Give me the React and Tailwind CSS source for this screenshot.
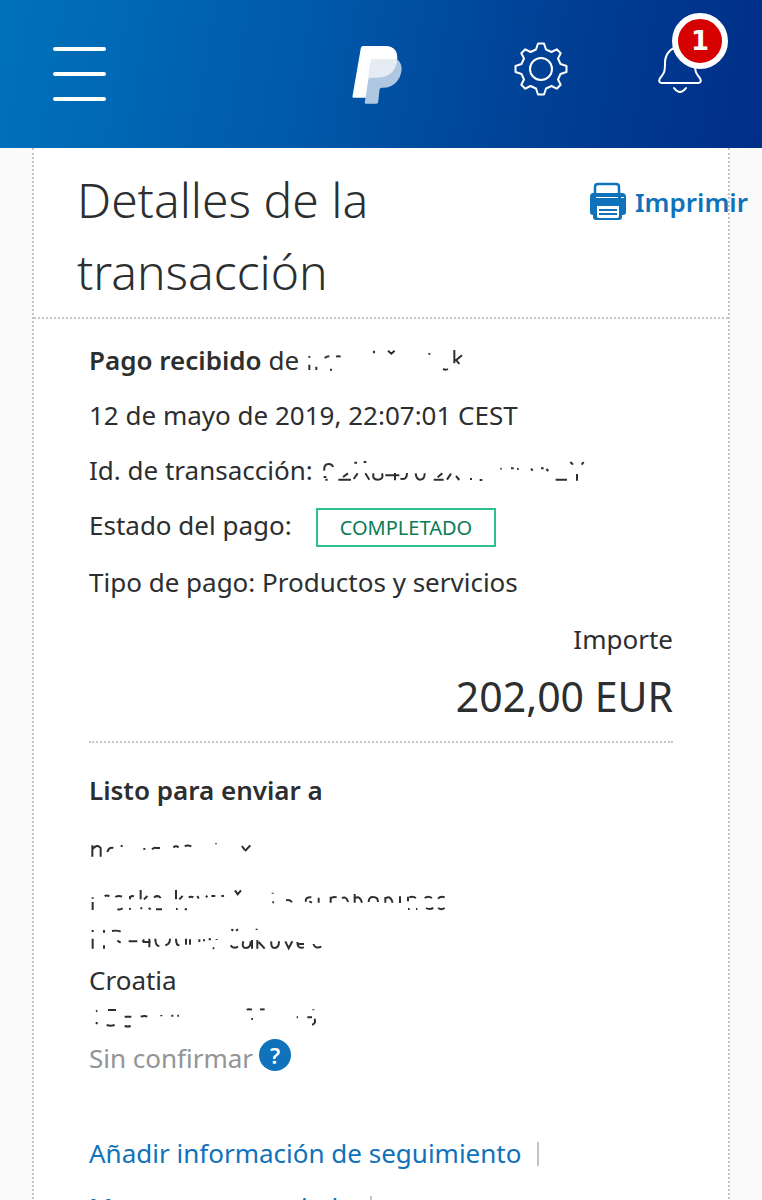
import React from "react";

const HIDDEN = {
  sender: {
    viewBox: "655 33 480 117",
    className: "w-[160px] h-[39px]",
    d: "M662 78v5M662 104v16M683 110v10M708 84q6 -5 14 -5M742 80q8 -3 14 0M724 119h6M856 62v8M898 62l10 9l10 -9M1022 69v5M1063 117q8 4 15 0M1097 60v40M1100 92l20 -16M1104 92l8 10",
  },
  transactionId: {
    viewBox: "700 363 801 117",
    className: "w-[267px] h-[39px]",
    d: "M710 422q-2 -20 13 -20q11 0 13 9M708 441h8M713 449h7M752 449h38M766 441l15 -11M798 447l12 -17M833 430l12 19M858 430q-6 19 13 19q18 0 12 -19M893 436h42M922 429v22M938 446q20 6 20 -17M984 430q2 19 14 19q13 0 13 -19M1038 449h30M1050 442l14 -12M1078 449l12 -18M1105 438l10 12M1150 444v6M1176 450h8M800 398h8M828 396h8M1238 416h4M1270 415h8M1288 417h5M1330 416l5 6M1360 415h8M1376 417l6 6M1404 449h34M1448 396l8 8M1488 396l-6 8M1468 432v20",
  },
  name: {
    viewBox: "27 216 501 117",
    className: "w-[167px] h-[39px]",
    d: "M37 256v34M37 268q14 -18 25 -4v26M82 276q4 -16 18 -12M122 257l6 2M190 268l6 -2M216 268q6 -6 14 -4h10M280 262q8 -6 16 0M314 258q10 -3 20 1M408 250v3M486 258l8 12M511 256l-16 17",
  },
  street: {
    viewBox: "27 375 1080 117",
    className: "w-[360px] h-[39px]",
    d: "M38 418v4M38 432v24M74 415q6 -5 14 0M106 417q10 -6 20 -1M150 424v-10M150 417q6 -4 12 -2M182 396v28M192 424l10 -10M222 418q12 -8 20 2M288 396v28M298 424l10 -10M326 418q8 -4 14 0M352 414l4 8M378 418l4 -5M394 414h12M424 415l8 -2M465 397l8 12l10 -12M112 454q10 2 16 -3M150 450v5M184 448v6M206 450l6 4M228 454h18M288 453h5M314 454h7M578 404v3M577 433h5M618 427q12 -4 18 6M678 431q-4 -14 16 -13M688 430l8 4M716 419v15M752 434v-18M754 420q8 -5 16 -2M786 420q14 -6 18 12M824 408v26M826 420q14 -8 20 14M866 432q0 -16 14 -15q14 0 14 15M916 434v-17M918 420q14 -8 20 14M960 415v20M984 430v-14M988 418q10 -5 20 2M1034 420q10 -8 22 0M1074 422q8 -9 20 -4M984 453h5M1008 453h4M1038 450q10 6 22 0M1074 450q10 7 20 0",
  },
  city: {
    viewBox: "27 492 720 117",
    className: "w-[240px] h-[39px]",
    d: "M38 516v6M38 542v30M72 516v8M72 562v10M96 519q16 -3 26 2M112 548l10 6M146 550h26M188 552h24M208 542v26M188 552l4 -8M226 542q0 22 12 22M256 562q14 -4 14 -20M288 542q0 20 10 20M318 542v18M330 560v-16M358 544v8M372 544v6M386 544h7M410 543v3M398 571h5M454 514l6 4M468 518l6 -4M530 512v4M452 562q8 12 22 4M490 550q-6 20 8 20q14 0 14 -20M516 546v26M532 546v26M536 552l18 20M574 550q-2 20 10 20q13 0 13 -20M616 550l10 21l11 -21M652 552q0 22 20 16M654 558h18M700 558q6 16 24 8",
  },
  phone: {
    viewBox: "27 126 720 117",
    className: "w-[240px] h-[39px]",
    d: "M48 160l4 -2M50 192v7M84 156h24M80 201q12 4 24 0M134 176h20M134 204q10 3 18 0M182 176q12 -4 20 0M244 175v-4M274 173h6M292 173h5M500 155q8 -3 16 0M540 155q8 -3 14 0M514 183h5M650 178h4M682 178h14M704 182q4 16 -8 18M700 154v3",
  },
};

function HiddenValue({ field }) {
  const { viewBox, className, d } = HIDDEN[field];
  return (
    <svg
      role="img"
      aria-label="Dato oculto"
      viewBox={viewBox}
      fill="none"
      stroke="#2c2e2f"
      strokeWidth="6"
      className={`block shrink-0 ${className}`}
    >
      <path d={d} />
    </svg>
  );
}

function Logo() {
  return (
    <svg viewBox="38 48 149 174" className="h-[58px] w-[50px]">
      <path
        fill="#fff"
        d="M64 54Q65 48 71 48H138C164 48 176 64 173 90C169 124 146 143 112 143H96L82 203H42Q38 203 39 199Z"
      />
      <path
        fill="#b0c7e1"
        d="M95 92Q96 87 101 87H171C182 94 188 106 186 122C182 152 160 173 132 173H126Q121 173 120 179L116 217Q115 221 111 221H79Q75 221 76 217Z"
      />
      <path
        fill="#e5ecf4"
        d="M95 92Q96 87 101 87H173C171 124 148 143 112 143H96Q89 143 87 150Z"
      />
    </svg>
  );
}

function GearIcon() {
  return (
    <svg
      viewBox="-27 -27 54 54"
      fill="none"
      stroke="#fff"
      strokeWidth="2"
      strokeLinejoin="round"
      className="h-[54px] w-[54px]"
    >
      <path d="M-3-25.5H3L5-19.5L10.5-17L15.7-19.7L19.7-15.7L17-10.5L19.5-5L25.5-3V3L19.5 5L17 10.5L19.7 15.7L15.7 19.7L10.5 17L5 19.5L3 25.5H-3L-5 19.5L-10.5 17L-15.7 19.7L-19.7 15.7L-17 10.5L-19.5 5L-25.5 3V-3L-19.5-5L-17-10.5L-19.7-15.7L-15.7-19.7L-10.5-17L-5-19.5Z" />
      <circle r="11" />
    </svg>
  );
}

function BellIcon() {
  return (
    <svg
      viewBox="0 0 44 48"
      fill="none"
      stroke="#fff"
      strokeWidth="2"
      strokeLinecap="round"
      strokeLinejoin="round"
      className="h-12 w-11"
    >
      <path d="M22 2C12 2 7 10 7 18C7 27 6 28 3 32C0 35 1 38 4 38H40C43 38 44 35 41 32C38 28 37 27 37 18C37 10 32 2 22 2Z" />
      <path d="M16 43Q22 51 28 43" />
    </svg>
  );
}

function PrinterIcon() {
  return (
    <svg viewBox="0 0 38 40" className="h-10 w-[38px]">
      <path
        d="M6 12V5Q6 2 9 2H27Q30 2 30 5V12"
        fill="none"
        stroke="#1072ba"
        strokeWidth="2.5"
      />
      <path
        fill="#1072ba"
        d="M4 11H33Q37 11 37 15V30Q37 33 34 33H33V35Q33 38 30 38H7Q4 38 4 35V33Q1 33 1 30V15Q1 11 4 11Z"
      />
      <path stroke="#fff" strokeWidth="1" d="M7 15.5H29M32 15.5H35" />
      <path fill="#fff" d="M8 24H30V34Q30 36 28 36H10Q8 36 8 34Z" />
      <path stroke="#1072ba" strokeWidth="2" d="M10 28H28M10 32H28" />
    </svg>
  );
}

function Header() {
  return (
    <header className="grid h-[148px] grid-cols-[1fr_auto_1fr] items-center bg-[linear-gradient(100deg,#0072bb_0%,#0059aa_40%,#003f94_72%,#002e87_100%)]">
      <button aria-label="Menú" className="ml-[53px] flex w-[53px] flex-col gap-[21px]">
        <span className="h-1 rounded-full bg-white" />
        <span className="h-1 rounded-full bg-white" />
        <span className="h-1 rounded-full bg-white" />
      </button>
      <a href="#inicio" aria-label="PayPal" className="mt-[2px] ml-[-8px]">
        <Logo />
      </a>
      <div className="flex items-center justify-between pr-[60px] pb-[10px] pl-[112px]">
        <button aria-label="Configuración">
          <GearIcon />
        </button>
        <button aria-label="Notificaciones" className="relative">
          <BellIcon />
          <span className="absolute -top-8 left-[14px] flex h-14 w-14 items-center justify-center rounded-full border-6 border-white bg-[#d50000] font-['DejaVu_Sans',sans-serif] text-[26px] font-bold text-white">
            1
          </span>
        </button>
      </div>
    </header>
  );
}

export default function App() {
  return (
    <div className="min-h-screen bg-[#fafafa] font-['Noto_Sans',sans-serif] text-[26px] leading-[39px] text-[#2c2e2f]">
      <Header />
      <main className="mx-8 border-x-2 border-dotted border-[#c4c4c4] bg-white">
        <div className="flex items-start border-b-2 border-dotted border-[#c4c4c4] pt-4 pb-[9px] pl-[43px]">
          <h1 className="min-w-0 flex-1 text-[48px] leading-[72px] font-light">
            Detalles de la transacción
          </h1>
          <button className="-mr-5 flex shrink-0 items-center gap-2 pt-[18px] font-semibold text-[#1072ba]">
            <PrinterIcon />
            Imprimir
          </button>
        </div>

        <div className="px-[55px] pt-[22px] pb-10">
          <section className="flex flex-col gap-4 border-b-2 border-dotted border-[#c4c4c4] pb-[18px]">
            <div className="flex gap-2">
              <p>
                <strong className="font-semibold">Pago recibido</strong> de
              </p>
              <HiddenValue field="sender" />
            </div>
            <p>12 de mayo de 2019, 22:07:01 CEST</p>
            <div className="flex gap-2">
              <p>Id. de transacción:</p>
              <HiddenValue field="transactionId" />
            </div>
            <div className="flex items-start gap-6">
              <p>Estado del pago:</p>
              <span className="mt-[2px] border-2 border-[#2fc08c] px-[22px] text-[20px] leading-[35px] text-[#0a7d55]">
                COMPLETADO
              </span>
            </div>
            <p>Tipo de pago: Productos y servicios</p>
            <dl className="mt-[2px] text-right">
              <dt>Importe</dt>
              <dd className="mt-[10px] text-[41px] leading-[54px]">202,00 EUR</dd>
            </dl>
          </section>

          <section className="pt-7">
            <h2 className="font-semibold">Listo para enviar a</h2>
            <address className="mt-[22px] not-italic">
              <HiddenValue field="name" />
              <div className="mt-3">
                <HiddenValue field="street" />
                <HiddenValue field="city" />
                <p>Croatia</p>
                <HiddenValue field="phone" />
              </div>
            </address>
            <div className="flex items-start gap-[6px] text-[#929496]">
              Sin confirmar
              <button
                aria-label="Ayuda"
                className="flex h-8 w-8 items-center justify-center rounded-full bg-[#1072ba] text-[22px] font-semibold text-white"
              >
                ?
              </button>
            </div>
          </section>

          <nav className="flex flex-wrap gap-y-[15px] pt-14 text-[#1072ba]">
            <div className="flex items-center gap-4">
              <a href="#seguimiento">Añadir información de seguimiento</a>
              <span className="h-6 w-[2px] bg-[#c4c4c4]" />
            </div>
            <div className="flex items-center gap-4">
              <a href="#enviado">Marcar como enviado</a>
              <span className="h-6 w-[2px] bg-[#c4c4c4]" />
            </div>
          </nav>
        </div>
      </main>
    </div>
  );
}
